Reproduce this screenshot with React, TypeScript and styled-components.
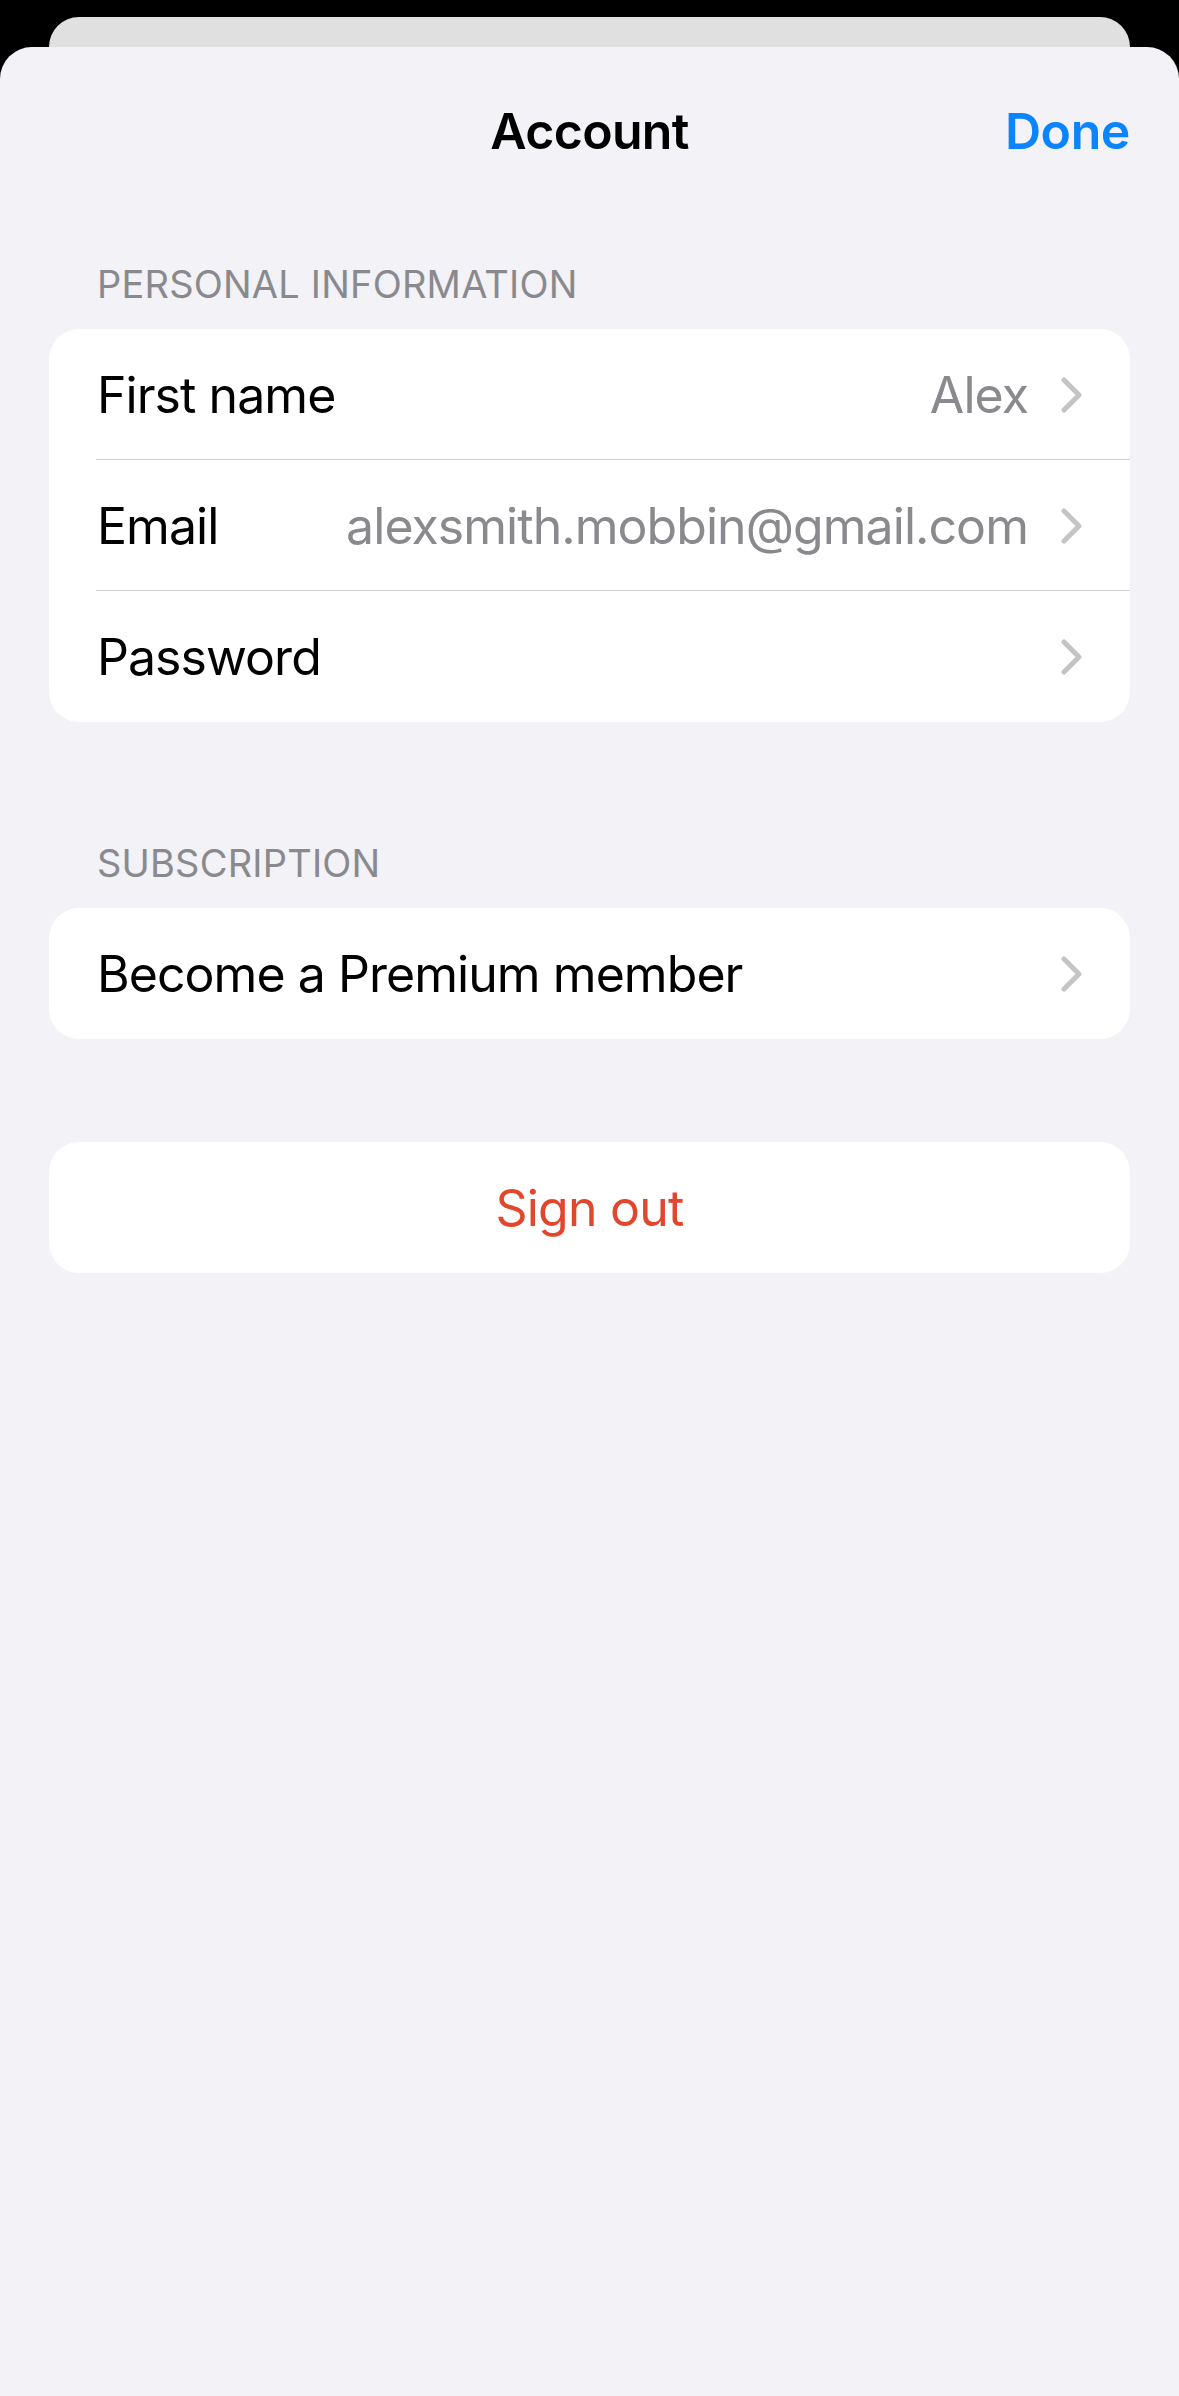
import styled, { createGlobalStyle } from "styled-components";

const GlobalStyle = createGlobalStyle`
  html, body {
    margin: 0;
    padding: 0;
    background: #000;
  }
  body {
    font-family: Inter, "Noto Sans", "Liberation Sans", sans-serif;
    -webkit-font-smoothing: antialiased;
  }
`;

const Screen = styled.div`
  min-height: 2396px;
  background: #000;
  display: flex;
  flex-direction: column;
  padding-top: 17px;
  box-sizing: border-box;
`;

const BehindSheet = styled.div`
  height: 30px;
  margin: 0 49px;
  background: #e0e0e0;
  border-radius: 30px 30px 0 0;
`;

const Sheet = styled.div`
  flex: 1;
  background: #f2f2f7;
  border-radius: 32px 32px 0 0;
  display: flex;
  flex-direction: column;
  padding: 0 49px;
`;

const NavBar = styled.div`
  height: 168px;
  display: grid;
  grid-template-columns: 1fr auto 1fr;
  align-items: center;
`;

const Title = styled.div`
  grid-column: 2;
  font-size: 50px;
  font-weight: 600;
  color: #000;
  letter-spacing: -0.7px;
`;

const DoneButton = styled.button`
  grid-column: 3;
  justify-self: end;
  border: none;
  background: none;
  padding: 0;
  font-family: inherit;
  font-size: 50px;
  font-weight: 600;
  color: #0a84ff;
  letter-spacing: -0.4px;
`;

const SectionHeader = styled.div<{ $top: number }>`
  margin-top: ${(p) => p.$top}px;
  margin-bottom: 21px;
  padding-left: 48px;
  font-size: 38px;
  line-height: 47px;
  color: #8a8a8e;
  letter-spacing: 0.2px;
`;

const Card = styled.div<{ $top?: number }>`
  margin-top: ${(p) => p.$top ?? 0}px;
  background: #fff;
  border-radius: 30px;
  overflow: hidden;
`;

const Row = styled.div<{ $divider?: boolean }>`
  height: 131px;
  display: flex;
  align-items: center;
  padding: 0 47px 0 48px;
  position: relative;

  ${(p) =>
    p.$divider &&
    `
    &::after {
      content: "";
      position: absolute;
      left: 47px;
      right: 0;
      bottom: 0;
      height: 1.5px;
      background: #d1d1d6;
    }
  `}
`;

const Label = styled.span`
  font-size: 50px;
  color: #000;
  letter-spacing: -0.95px;
  white-space: nowrap;
`;

const Value = styled.span`
  margin-left: auto;
  font-size: 50px;
  color: #8a8a8e;
  letter-spacing: -0.95px;
  white-space: nowrap;
`;

const ChevronBox = styled.span<{ $alone?: boolean }>`
  margin-left: ${(p) => (p.$alone ? "auto" : "33px")};
  display: flex;
  align-items: center;
`;

const SignOut = styled.button`
  width: 100%;
  height: 131px;
  border: none;
  background: none;
  font-family: inherit;
  font-size: 50px;
  color: #e2472e;
  letter-spacing: -0.8px;
`;

const Chevron = ({ alone }: { alone?: boolean }) => (
  <ChevronBox $alone={alone}>
    <svg width="22" height="36" viewBox="0 0 22 36" fill="none">
      <path
        d="M3 3 L18 18 L3 33"
        stroke="#c4c4c7"
        strokeWidth="5"
        strokeLinecap="round"
        strokeLinejoin="round"
      />
    </svg>
  </ChevronBox>
);

export default function App() {
  return (
    <>
      <GlobalStyle />
      <Screen>
        <BehindSheet />
        <Sheet>
          <NavBar>
            <Title>Account</Title>
            <DoneButton>Done</DoneButton>
          </NavBar>

          <SectionHeader $top={46}>PERSONAL INFORMATION</SectionHeader>
          <Card>
            <Row $divider>
              <Label>First name</Label>
              <Value>Alex</Value>
              <Chevron />
            </Row>
            <Row $divider>
              <Label>Email</Label>
              <Value>alexsmith.mobbin@gmail.com</Value>
              <Chevron />
            </Row>
            <Row>
              <Label>Password</Label>
              <Chevron alone />
            </Row>
          </Card>

          <SectionHeader $top={118}>SUBSCRIPTION</SectionHeader>
          <Card>
            <Row>
              <Label>Become a Premium member</Label>
              <Chevron alone />
            </Row>
          </Card>

          <Card $top={103}>
            <SignOut>Sign out</SignOut>
          </Card>
        </Sheet>
      </Screen>
    </>
  );
}
